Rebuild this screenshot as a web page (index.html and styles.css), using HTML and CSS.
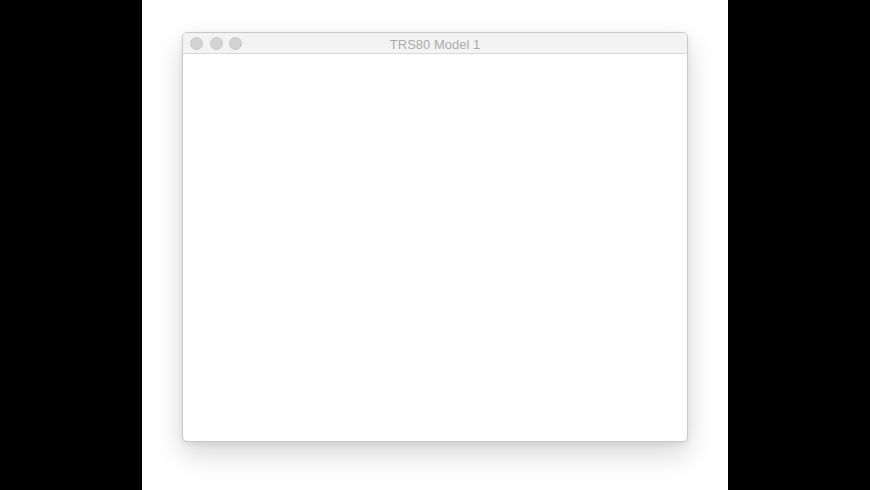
FILE: index.html
```html
<!DOCTYPE html>
<html lang="en">

<head>
    <meta charset="UTF-8">
    <meta name="viewport" content="width=device-width, initial-scale=1.0">
    <title>TRS80 Model 1</title>
    <link rel="stylesheet" href="styles.css">
</head>

<body>
    <div class="stage">
        <div class="window">
            <div class="titlebar">
                <div class="lights">
                    <span class="light"></span>
                    <span class="light"></span>
                    <span class="light"></span>
                </div>
                <div class="title">TRS80 Model 1</div>
            </div>
            <div class="content"></div>
        </div>
    </div>
</body>

</html>
```

FILE: styles.css
```css
* {
    margin: 0;
    box-sizing: border-box;
}

body {
    background-color: black;
    height: 490px;
    display: flex;
    justify-content: center;
    font-family: "Liberation Sans", Arial, sans-serif;
}

.stage {
    width: 586px;
    height: 490px;
    background-color: white;
    padding: 32px 40px 0 40px;
}

.window {
    width: 506px;
    height: 410px;
    border: 1px solid #c9c9c9;
    border-radius: 5px;
    background-color: #fefefe;
    box-shadow: 0 12px 28px rgba(0, 0, 0, 0.16), 0 2px 6px rgba(0, 0, 0, 0.08);
    display: flex;
    flex-direction: column;
    overflow: hidden;
}

.titlebar {
    position: relative;
    height: 21px;
    background-color: #f3f3f3;
    border-bottom: 1px solid #d8d8d8;
    display: flex;
    align-items: center;
    justify-content: center;
    padding-top: 2px;
}

.lights {
    position: absolute;
    left: 7px;
    top: 4px;
    display: flex;
    gap: 6.5px;
}

.light {
    width: 13px;
    height: 13px;
    border-radius: 50%;
    background-color: #d3d3d3;
    border: 1px solid #c8c8c8;
}

.title {
    font-size: 13px;
    color: #ababab;
}

.content {
    flex: 1;
}
```
